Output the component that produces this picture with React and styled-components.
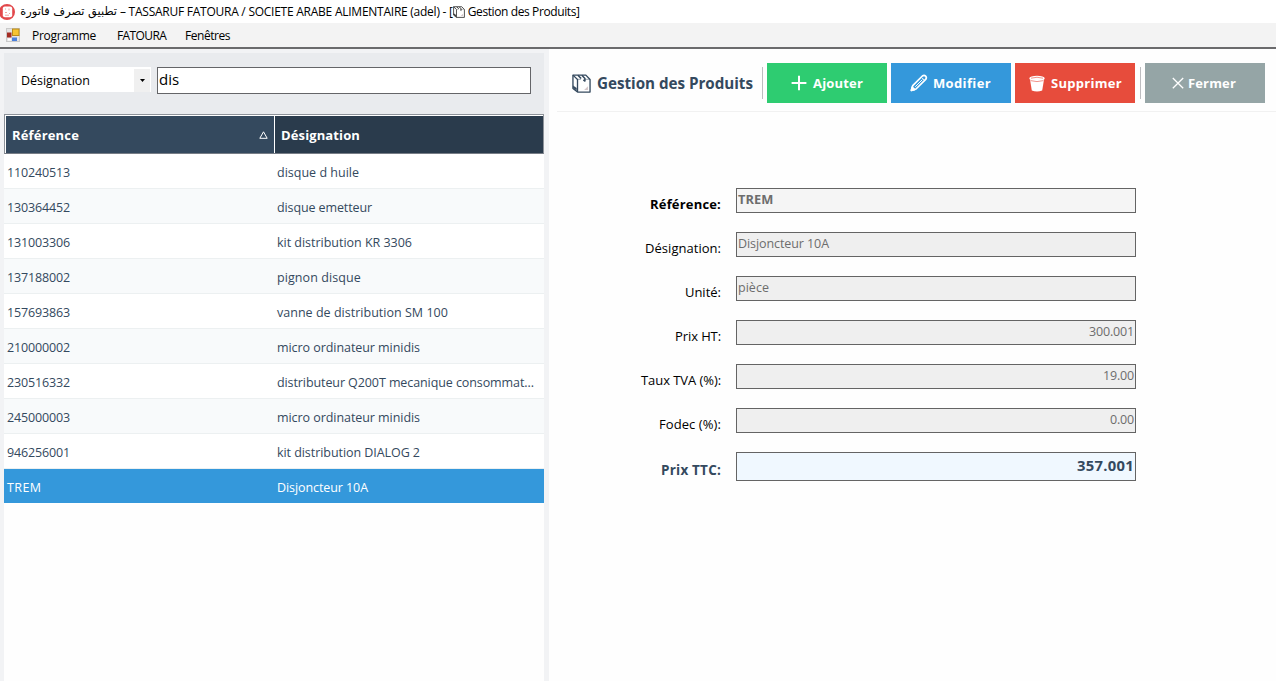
import React from 'react';
import styled, { createGlobalStyle } from 'styled-components';

const Global = createGlobalStyle`
  *, *::before, *::after { box-sizing: border-box; }
  body { margin: 0; background: #fefefe; overflow: hidden; font-family: "Open Sans", "Noto Sans", "DejaVu Sans", sans-serif; }
  svg { flex: none; }
`;

const Text = styled.span`
  font-size: ${p => p.$size || 12.5}px;
  font-weight: ${p => (p.$bold ? 700 : 400)};
  letter-spacing: ${p => p.$track || 0}px;
  white-space: pre;
`;

const Window = styled.div`
  width: 1276px;
  height: 681px;
  display: flex;
  flex-direction: column;
  color: #000;
`;

const TitleBar = styled.header`
  height: 23px;
  display: flex;
  align-items: center;
  background: #fff;
  line-height: 23px;
`;

const ArabicTitle = styled.span`
  direction: rtl;
  width: 97px;
  margin: 0 3px 0 4px;
  flex: none;
  font-family: "DejaVu Sans", sans-serif;
  font-size: 11.4px;
  white-space: nowrap;
`;

const TitleIcon = styled.span`
  width: 15px;
  display: flex;
  flex: none;
`;

const MenuBar = styled.nav`
  height: 26px;
  display: flex;
  align-items: center;
  padding-left: 6px;
  background: #f3f3f3;
  border-bottom: 2px solid #6a6a6c;
`;

const MenuItem = styled.div`
  width: ${p => p.$width}px;
  height: 24px;
  line-height: 22px;
  flex: none;
`;

const MenuIcon = styled(MenuItem)`
  display: flex;
  align-items: center;
`;

const Body = styled.main`
  flex: 1;
  display: flex;
  min-height: 0;
`;

const ListPane = styled.section`
  width: 549px;
  padding: 4px 5px 0 4px;
  background: #f2f3f5;
  display: flex;
  flex-direction: column;
`;

const SearchBar = styled.div`
  height: 61px;
  flex: none;
  display: flex;
  align-items: flex-start;
  gap: 6px;
  padding: 14px 13px 0;
  background: #e9ebee;
`;

const Combo = styled.div`
  width: 134px;
  height: 25px;
  display: flex;
  justify-content: space-between;
  align-items: center;
  padding: 2px 0 0 4px;
  line-height: 23px;
  background: #fff;
`;

const ComboButton = styled.span`
  width: 16px;
  height: 23px;
  margin: 0 1px 1px 0;
  display: flex;
  align-items: center;
  justify-content: center;
  background: #f0f0f0;
`;

const SearchInput = styled.div`
  width: 374px;
  height: 27px;
  border: 1px solid #646568;
  background: #fff;
  padding-left: 1px;
  line-height: 23px;
`;

const Grid = styled.div`
  flex: 1;
  background: #fefefe;
`;

const GridHead = styled.div`
  height: 40px;
  display: flex;
  border: 1px solid #8d9299;
  border-bottom: 1px solid #777d86;
  color: #fff;
`;

const HeadCell = styled.div`
  flex: ${p => (p.$width ? `0 0 ${p.$width}px` : '1')};
  display: flex;
  justify-content: space-between;
  align-items: center;
  padding: 0 6px 0 6px;
  background: ${p => p.$color};
  border-top: 1px solid #fff;
  border-left: 1px solid #fff;
`;

const Row = styled.div`
  height: 35px;
  display: flex;
  align-items: center;
  color: ${p => (p.$selected ? '#fff' : '#34495e')};
  background: ${p => (p.$selected ? '#3498db' : p.$odd ? '#f8fafb' : '#fff')};
  border-bottom: 1px solid ${p => (p.$selected ? '#fff' : '#ecf0f1')};
`;

const Cell = styled.div`
  width: 270px;
  padding-left: 3px;
`;

const DetailPane = styled.section`
  flex: 1;
  padding-left: 8px;
  background: #fefefe;
`;

const Toolbar = styled.div`
  height: 63px;
  display: flex;
  align-items: center;
  padding: 6px 0 0 15px;
  border-bottom: 1px solid #f1f1f1;
`;

const Heading = styled.div`
  width: 190px;
  display: flex;
  align-items: center;
  gap: 6px;
  color: #34495e;
`;

const Separator = styled.span`
  width: 1px;
  height: 32px;
  margin-right: 4px;
  background: #bdbdc0;
`;

const Button = styled.div`
  width: 120px;
  height: 40px;
  margin-right: ${p => p.$after}px;
  padding-left: ${p => p.$inset}px;
  display: flex;
  align-items: center;
  gap: ${p => p.$gap}px;
  color: #fff;
  background: ${p => p.$color};
`;

const Form = styled.div`
  padding: 76px 0 0 64px;
`;

const Field = styled.div`
  display: flex;
  align-items: flex-start;
  height: 44px;
`;

const FieldLabel = styled.div`
  width: 100px;
  margin-right: 15px;
  text-align: right;
  line-height: 20px;
  padding-top: ${p => p.$drop}px;
  color: ${p => p.$color || '#000'};
`;

const Input = styled.div`
  width: 400px;
  height: ${p => p.$height || 25}px;
  padding: 0 1px;
  border: 1px solid #646464;
  background: ${p => p.$bg || '#efefef'};
  color: ${p => p.$color || '#6d6d6d'};
  text-align: ${p => (p.$right ? 'right' : 'left')};
  line-height: ${p => p.$line || 19}px;
`;

const AppIcon = () => (
  <svg width="16" height="18" viewBox="0 0 16 18">
    <circle cx="7" cy="9" r="8" fill="#e2484b" />
    <rect x="2.8" y="3.6" width="9.4" height="10.6" rx="2" fill="#fff" />
    <path d="M5 6h1M9 5.5v2M5 9.5h2M9 11l1-1M5 12.2h4" stroke="#eea3a0" strokeWidth="1" />
  </svg>
);

const FormIcon = () => (
  <svg width="14" height="14" viewBox="0 0 14 14">
    <rect x=".5" y=".5" width="13" height="13" fill="#e4e4e4" stroke="#c9c9c9" />
    <rect x="1" y="4.5" width="4.5" height="5" fill="#a32b22" />
    <rect x="6.5" y="1" width="6.5" height="6.5" fill="#f6c332" stroke="#b98b1c" />
    <rect x="6" y="9.5" width="5" height="3.5" fill="#4a7fdc" />
    <rect x="2" y="10.5" width="3" height="2" fill="#fff" />
  </svg>
);

const BoxIcon = ({ size, color }) => (
  <svg width={size} height={size} viewBox="0 0 20 20" fill="none" stroke={color} strokeWidth="1.4" strokeLinejoin="round">
    <path d="M1 1.2h13.6L19 5.8V19H5.8L1 15.2Z" />
    <path d="M1 1.2l4.8 4.6V19" />
    <path d="M5.8 5.6h3.6M14 5.6h5" strokeWidth=".5" />
    <path d="M6.2 1.4l3.4 3.4M10.4 1.4l3.2 3.4v2.6l-1.6-1.2" strokeWidth="1.6" />
    <path d="M1.2 12.4l3.6 2.4v2.6L1.2 14.8Z" fill={color} strokeWidth=".3" />
    <path d="M16.8 13v3.8h-4z" fill="#d3c6c8" stroke="none" />
  </svg>
);

const PlusIcon = () => (
  <svg width="16" height="16" viewBox="0 0 16 16" stroke="#fff" strokeWidth="2"><path d="M8 .8v14.4M.6 8h14.8" /></svg>
);

const PencilIcon = () => (
  <svg width="18" height="18" viewBox="0 0 18 18" fill="none" stroke="#fff" strokeWidth="1.7" strokeLinejoin="round">
    <path d="M1.4 16.4l1.3-4.8L12.4 2q1.8-1.3 3.2.1t.1 3.3L6 15Z" />
    <path d="M12 3.8l2.2 2.2M5.2 12.8L12.4 5.6" strokeWidth="1" />
    <path d="M1.4 16.4l.8-3.2 2.4 2.4z" fill="#fff" />
  </svg>
);

const BinIcon = () => (
  <svg width="18" height="17" viewBox="0 0 18 17">
    <path d="M2 4.5h14L14.2 15.6q-5.2 1.8-10.4 0Z" fill="#fff" />
    <ellipse cx="9" cy="3.4" rx="7.7" ry="2.7" fill="#fff" />
    <path d="M3 3.2q6-1.9 12 0M2.6 5.6q6.4 2 12.8 0" fill="none" stroke="#e74c3c" strokeWidth=".6" />
  </svg>
);

const CloseIcon = () => (
  <svg width="12" height="12" viewBox="0 0 12 12" stroke="#fff" strokeWidth="1.3"><path d="M.8 1l10.4 10.2M11.2 1L.8 11.2" /></svg>
);

const products = [
  { ref: '110240513', name: 'disque d huile', track: 0.01 },
  { ref: '130364452', name: 'disque emetteur', track: -0.11 },
  { ref: '131003306', name: 'kit distribution KR 3306', track: -0.02 },
  { ref: '137188002', name: 'pignon disque', track: 0.09 },
  { ref: '157693863', name: 'vanne de distribution SM 100', track: 0.02 },
  { ref: '210000002', name: 'micro ordinateur minidis', track: -0.06 },
  { ref: '230516332', name: 'distributeur Q200T mecanique consommat...', track: -0.09 },
  { ref: '245000003', name: 'micro ordinateur minidis', track: -0.06 },
  { ref: '946256001', name: 'kit distribution DIALOG 2', track: -0.06 },
  { ref: 'TREM', refTrack: 0.4, name: 'Disjoncteur 10A', track: -0.08, selected: true },
];

const fields = [
  { label: 'Référence:', labelTrack: 0.18, value: 'TREM', track: 0.1, bold: true, bg: '#f5f5f5' },
  { label: 'Désignation:', labelTrack: 0.03, value: 'Disjoncteur 10A', track: -0.08 },
  { label: 'Unité:', value: 'pièce', track: 0.03 },
  { label: 'Prix HT:', labelTrack: -0.1, value: '300.001', track: -0.17, right: true },
  { label: 'Taux TVA (%):', labelTrack: -0.07, value: '19.00', track: -0.17, right: true },
  { label: 'Fodec (%):', labelTrack: 0.08, value: '0.00', track: -0.18, right: true },
];

export default function App() {
  return (
    <Window>
      <Global />
      <TitleBar>
        <AppIcon />
        <ArabicTitle>تطبيق تصرف فاتورة</ArabicTitle>
        <Text $size={12} $track={-0.25}>– TASSARUF FATOURA / SOCIETE ARABE ALIMENTAIRE (adel) - [</Text>
        <TitleIcon><BoxIcon size={12} color="#333" /></TitleIcon>
        <Text $size={12} $track={-0.39}>Gestion des Produits]</Text>
      </TitleBar>
      <MenuBar>
        <MenuIcon $width={26}><FormIcon /></MenuIcon>
        <MenuItem $width={85}><Text $size={12} $track={-0.27}>Programme</Text></MenuItem>
        <MenuItem $width={68}><Text $size={12} $track={-0.6}>FATOURA</Text></MenuItem>
        <MenuItem $width={60}><Text $size={12} $track={-0.46}>Fenêtres</Text></MenuItem>
      </MenuBar>
      <Body>
        <ListPane>
          <SearchBar>
            <Combo>
              <Text $track={-0.04}>Désignation</Text>
              <ComboButton><svg width="5" height="3" viewBox="0 0 5 3"><path d="M0 0h5L2.5 3z" /></svg></ComboButton>
            </Combo>
            <SearchInput><Text $size={15}>dis</Text></SearchInput>
          </SearchBar>
          <Grid>
            <GridHead>
              <HeadCell $width={269} $color="#34495e">
                <Text $bold $size={13} $track={0.17}>Référence</Text>
                <svg width="9" height="8" viewBox="0 0 9 8" fill="none" stroke="#fff"><path d="M.8 7.3L4.5.8l3.7 6.5z" /></svg>
              </HeadCell>
              <HeadCell $color="#2a3b4c"><Text $bold $size={13} $track={0.12}>Désignation</Text></HeadCell>
            </GridHead>
            {products.map((p, i) => (
              <Row key={p.ref} $odd={i % 2 === 1} $selected={p.selected}>
                <Cell><Text $track={p.refTrack || -0.15}>{p.ref}</Text></Cell>
                <Cell><Text $track={p.track}>{p.name}</Text></Cell>
              </Row>
            ))}
          </Grid>
        </ListPane>
        <DetailPane>
          <Toolbar>
            <Heading>
              <BoxIcon size={19} color="#34495e" />
              <Text $bold $size={15.2} $track={-0.02}>Gestion des Produits</Text>
            </Heading>
            <Separator />
            <Button $color="#2ecc71" $inset={24} $gap={6} $after={4}><PlusIcon /><Text $bold $size={13} $track={0.18}>Ajouter</Text></Button>
            <Button $color="#3498db" $inset={19} $gap={5} $after={4}><PencilIcon /><Text $bold $size={13} $track={0.36}>Modifier</Text></Button>
            <Button $color="#e74c3c" $inset={13} $gap={5} $after={5}><BinIcon /><Text $bold $size={13} $track={0.29}>Supprimer</Text></Button>
            <Separator />
            <Button $color="#95a5a6" $inset={27} $gap={4} $after={0}><CloseIcon /><Text $bold $size={13} $track={0.15}>Fermer</Text></Button>
          </Toolbar>
          <Form>
            {fields.map(f => (
              <Field key={f.label}>
                <FieldLabel $drop={5}><Text $size={13} $bold={f.bold} $track={f.labelTrack}>{f.label}</Text></FieldLabel>
                <Input $right={f.right} $bg={f.bg}><Text $bold={f.bold} $size={f.bold && 12.8} $track={f.track}>{f.value}</Text></Input>
              </Field>
            ))}
            <Field>
              <FieldLabel $drop={7} $color="#34495e"><Text $bold $size={13.5} $track={0.2}>Prix TTC:</Text></FieldLabel>
              <Input $right $height={29} $line={24} $bg="#f0f8ff" $color="#34495e"><Text $bold $size={14.8} $track={0.28}>357.001</Text></Input>
            </Field>
          </Form>
        </DetailPane>
      </Body>
    </Window>
  );
}
